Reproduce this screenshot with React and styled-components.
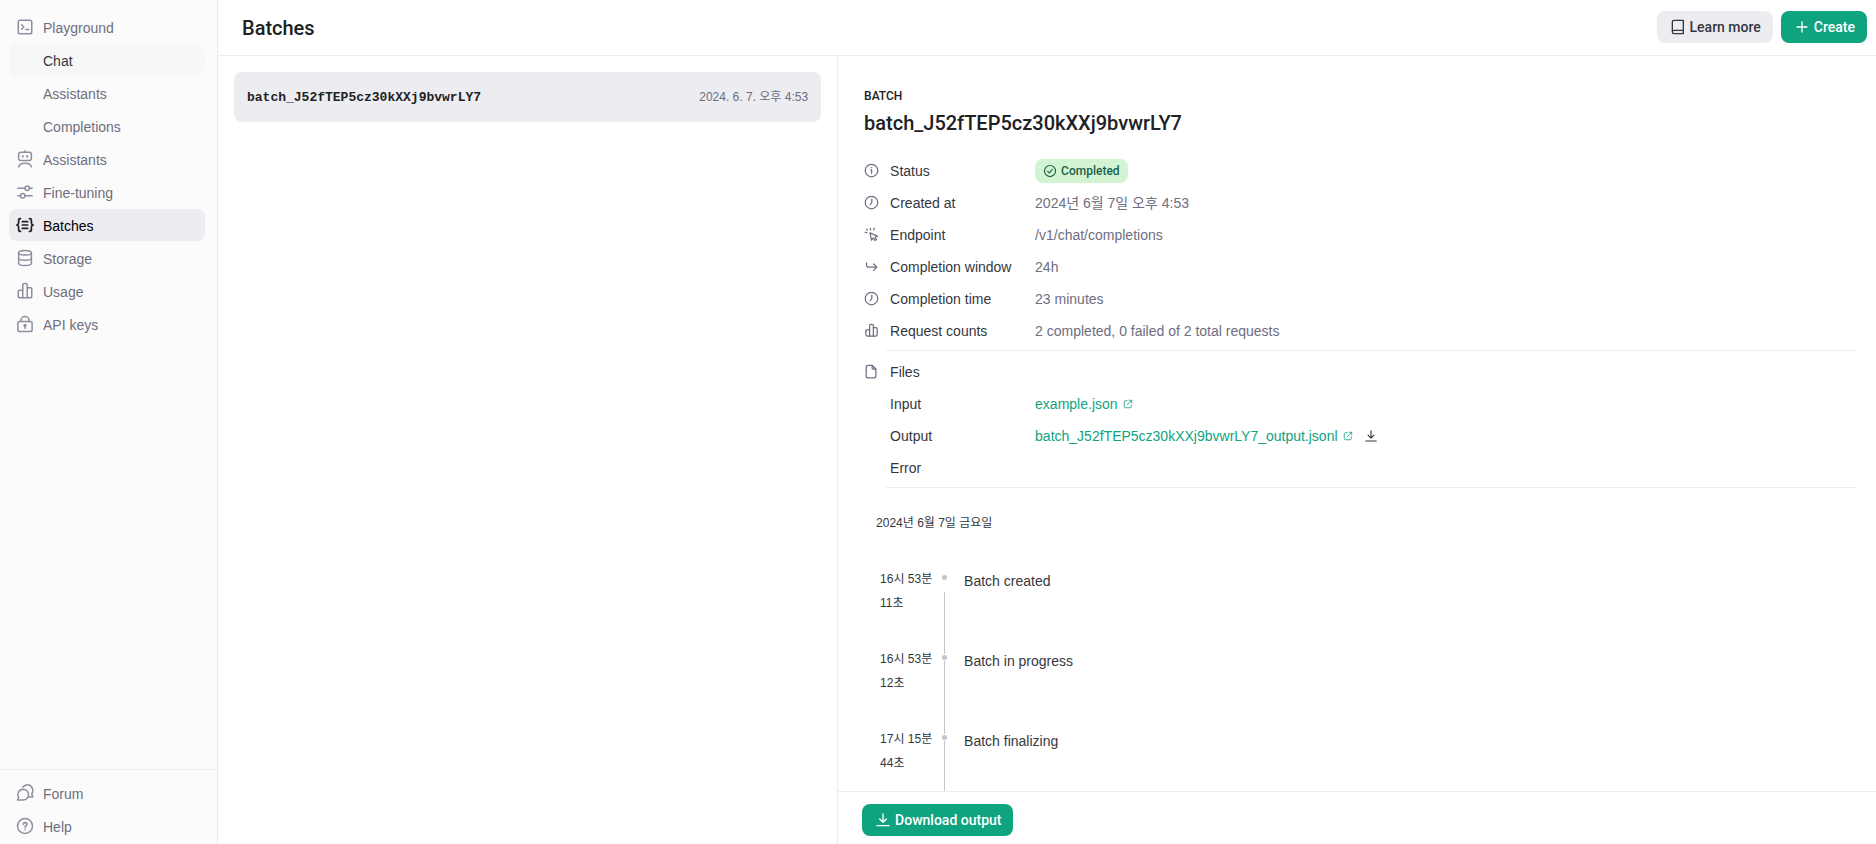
import React from "react";
import styled, { createGlobalStyle } from "styled-components";

//colors
const GREEN = "#10a37f";
const INK = "#202123";
const TEXT = "#353740";
const GRAY = "#6e6e80";
const ICON_GRAY = "#8e8ea0";
const LINE = "#ececec";
const SOFT = "#ececf1";

//fonts
const SANS = `"Liberation Sans", "Noto Sans CJK KR", sans-serif`;
const MEDIUM = `Roboto, "Noto Sans CJK KR", sans-serif`;
const MONO = `"Liberation Mono", monospace`;

const GlobalStyle = createGlobalStyle`
  * { box-sizing: border-box; }
  body {
    margin: 0;
    font-family: ${SANS};
    font-size: 14px;
    line-height: 20px;
    color: ${TEXT};
    background: #fff;
  }
  h1, h2, p, dl, dd, ul, ol { margin: 0; padding: 0; }
  ul, ol { list-style: none; }
  a { color: inherit; text-decoration: none; }
  button { font: inherit; color: inherit; border: 0; cursor: pointer; }
`;

const Page = styled.div`
  display: flex;
  height: 100vh;
  overflow: hidden;
`;

const Sidebar = styled.nav`
  display: flex;
  flex-direction: column;
  justify-content: space-between;
  flex: 0 0 218px;
  background: #fbfbfb;
  border-right: 1px solid ${LINE};
`;

const NavList = styled.ul`
  display: flex;
  flex-direction: column;
  gap: 1px;
  padding: ${(props) => (props.$bottom ? "7px 12px 2px 9px" : "11px 12px 0 9px")};
  border-top: ${(props) => (props.$bottom ? `1px solid ${LINE}` : "none")};
`;

const NavLink = styled.a`
  display: flex;
  align-items: center;
  gap: 9px;
  height: 32px;
  padding: 0 7px;
  padding-left: ${(props) => (props.$sub ? "34px" : "7px")};
  border-radius: 8px;
  color: ${(props) => (props.$active ? "#000" : props.$hovered ? TEXT : GRAY)};
  background: ${(props) => (props.$active ? SOFT : props.$hovered ? "#f7f7f7" : "transparent")};

  svg {
    color: ${(props) => (props.$active ? INK : ICON_GRAY)};
    flex: none;
  }
`;

const NavLabel = styled.span`
  padding-top: 2px;
`;

const Main = styled.main`
  display: flex;
  flex-direction: column;
  flex: 1;
  min-width: 0;
`;

const TopBar = styled.header`
  display: flex;
  justify-content: space-between;
  align-items: center;
  height: 56px;
  flex: none;
  padding: 0 9px 0 24px;
  border-bottom: 1px solid ${LINE};
`;

const PageTitle = styled.h1`
  font-family: ${MEDIUM};
  font-size: 20px;
  line-height: 28px;
  font-weight: 500;
  color: ${INK};
`;

const Actions = styled.div`
  display: flex;
  gap: 8px;
  padding-bottom: 2px;
`;

const Button = styled.button`
  display: flex;
  align-items: center;
  gap: 4px;
  height: 32px;
  padding: 0 12px 0 13px;
  border-radius: 8px;
  font-family: ${MEDIUM};
  font-weight: 500;
  color: ${(props) => (props.$primary ? "#fff" : TEXT)};
  background: ${(props) => (props.$primary ? GREEN : SOFT)};
`;

const Split = styled.div`
  display: flex;
  flex: 1;
  min-height: 0;
`;

const ListPane = styled.section`
  width: 37.4%;
  flex: none;
  padding: 16px;
  border-right: 1px solid ${LINE};
`;

const BatchItem = styled.button`
  display: flex;
  justify-content: space-between;
  align-items: center;
  width: 100%;
  height: 50px;
  padding: 0 13px;
  border-radius: 8px;
  background: ${SOFT};
`;

const BatchName = styled.span`
  padding-top: 2px;
  font-family: ${MONO};
  font-size: 13px;
  font-weight: 700;
  color: ${INK};
`;

const BatchDate = styled.span`
  font-size: 12px;
  color: ${GRAY};
`;

const DetailPane = styled.section`
  display: flex;
  flex-direction: column;
  flex: 1;
  min-width: 0;
`;

const DetailBody = styled.div`
  display: flex;
  flex-direction: column;
  flex: 1;
  min-height: 0;
  overflow: hidden;
  padding: 30px 20px 0 26px;
`;

const Overline = styled.p`
  font-family: ${MEDIUM};
  font-size: 12px;
  font-weight: 500;
  color: ${INK};
`;

const BatchTitle = styled.h2`
  margin: 3px 0 18px;
  font-family: ${MEDIUM};
  font-size: 20px;
  line-height: 28px;
  font-weight: 500;
  color: ${INK};
`;

const Property = styled.div`
  display: grid;
  grid-template-columns: 26px 145px 1fr;
  align-items: center;
  height: 32px;

  svg {
    display: block;
  }
`;

const PropertyIcon = styled.span`
  padding-bottom: 2px;
  color: ${GRAY};
`;

const Value = styled.dd`
  display: flex;
  align-items: center;
  color: ${GRAY};
`;

const Divider = styled.hr`
  width: calc(100% - 22px);
  flex: none;
  margin: 3px 0 5px 22px;
  border: 0;
  border-top: 1px solid ${SOFT};
`;

const Badge = styled.span`
  display: flex;
  align-items: center;
  gap: 4px;
  height: 24px;
  padding: 0 8px;
  border-radius: 8px;
  font-family: ${MEDIUM};
  font-size: 12px;
  font-weight: 500;
  color: #1a5f4a;
  background: #d2f4d3;
`;

const FileLink = styled.a`
  display: flex;
  align-items: center;
  gap: 5px;
  color: ${GREEN};
`;

const IconButton = styled.button`
  display: flex;
  margin-left: 11px;
  padding: 0;
  background: none;
  color: ${TEXT};
`;

const TimelineDate = styled.p`
  padding: 20px 12px 34px;
  font-size: 12px;
`;

const Timeline = styled.ol`
  display: flex;
  flex-direction: column;
  flex: 1;
  min-height: 0;
`;

const Step = styled.li`
  display: grid;
  grid-template-columns: 58px 18px 1fr;
  column-gap: 4px;
  height: 80px;
  padding-left: 16px;

  &:last-child {
    height: auto;
    flex: 1;
  }
`;

const StepTime = styled.time`
  font-size: 12px;
  line-height: 24px;
`;

const Rail = styled.div`
  display: flex;
  flex-direction: column;
  padding-top: 8px;
`;

const Dot = styled.span`
  width: 5px;
  height: 5px;
  flex: none;
  border-radius: 50%;
  background: #c5c5d2;
`;

const Stem = styled.span`
  width: 1px;
  flex: 1;
  margin: ${(props) => (props.$first ? "12px" : "1px")} 2px -7px;
  background: #c5c5d2;
`;

const StepLabel = styled.span`
  padding-top: 4px;
`;

const Footer = styled.footer`
  display: flex;
  flex: none;
  padding: 12px 24px 8px;
  border-top: 1px solid ${LINE};
`;

const shapes = {
  playground: (
    <>
      <rect x="3" y="3" width="18" height="18" rx="2.5" />
      <path d="M7.5 9l3 3-3 3M13 15.2h4" />
    </>
  ),
  assistant: (
    <>
      <rect x="3.5" y="3" width="17" height="11" rx="3" />
      <path d="M12 1v2M3.500 22.500C4 19.500 7.500 17.500 12 17.500s8 2 8.500 5" />
      <path d="M9 7.800v1.200M15 7.800v1.200" strokeWidth="2.400" />
    </>
  ),
  tuning: (
    <>
      <circle cx="15" cy="7" r="3" />
      <circle cx="9" cy="17" r="3" />
      <path d="M2.500 7H12M18 7h3.500M2.500 17H6M12 17h9.500" />
    </>
  ),
  batches: (
    <g strokeWidth="2.300">
      <path d="M6 3.500H5.500C4 3.500 3.500 4.500 3.500 6v3c0 1.700-.8 2.600-2.300 3 1.500.4 2.300 1.300 2.300 3v3c0 1.500.5 2.500 2 2.500H6" />
      <path d="M18 3.500h.5c1.500 0 2 1 2 2.500v3c0 1.700.8 2.600 2.300 3-1.500.4-2.300 1.300-2.300 3v3c0 1.500-.5 2.500-2 2.500H18" />
      <path d="M8.500 7.500h7M8.500 12h7M8.500 16.500h7" />
    </g>
  ),
  storage: (
    <>
      <ellipse cx="12" cy="5" rx="8.500" ry="3" />
      <path d="M3.500 5V19c0 1.700 3.800 3 8.500 3s8.500-1.300 8.500-3V5M3.500 12c0 1.700 3.800 3 8.500 3s8.500-1.300 8.500-3" />
    </>
  ),
  chart: (
    <>
      <path d="M9 21V4.500C9 3 9.700 2 11 2h2c1.300 0 2 1 2 2.500V21" />
      <path d="M9 11H4.500C3.700 11 3 11.700 3 12.500V18.500C3 20 4 21 5.500 21H18.500c1.500 0 2.500-1 2.500-2.500V9C21 8 20.300 7.500 19.500 7.500H15" />
    </>
  ),
  lock: (
    <>
      <rect x="2.500" y="8.500" width="19" height="13.500" rx="2.500" />
      <path d="M6.500 8.500V7.500a5.500 5.500 0 0 1 11 0v1M12 15v2.500" />
      <circle cx="12" cy="14" r="1.200" fill="currentColor" />
    </>
  ),
  forum: (
    <>
      <path d="M9.500 7a7.200 7.200 0 1 1 0 14.400H2l1.500-3.400A7.200 7.200 0 0 1 9.500 7z" />
      <path d="M9 4.200a7.400 7.400 0 0 1 12 8.800l1.500 4.200H17" />
    </>
  ),
  help: (
    <>
      <circle cx="12" cy="12" r="10" />
      <path d="M9.700 9.500c.2-1.400 1.200-2 2.400-2 1.300 0 2.400.8 2.400 2.100 0 1.700-2.400 1.900-2.400 3.900M12.100 16.500v.2" strokeWidth="2.200" />
    </>
  ),
  book: (
    <path d="M6 2h14v20H6a2.500 2.500 0 0 1-2.500-2.500v-15A2.500 2.500 0 0 1 6 2zM3.500 19.500A2.500 2.500 0 0 1 6 17H20" />
  ),
  plus: <path d="M12 4.500v15M4.500 12h15" />,
  info: (
    <>
      <circle cx="12" cy="12" r="10" />
      <path d="M11 11h1.200v5.500M12 7.200v.2" />
    </>
  ),
  clock: (
    <>
      <circle cx="12" cy="12" r="10" />
      <path d="M12.500 6.500V12l-2.500 3.500" />
    </>
  ),
  check: (
    <>
      <circle cx="12" cy="12" r="9.500" />
      <path d="M8 12.500l2.800 2.800L16 9" />
    </>
  ),
  cursor: (
    <path d="M9.500 9.500l2.500 11.500 3-3.500 2.500 4 2.500-1.500-2-4 3.500-1.500L9.500 9.500zM10 2l.5 2.500M2 8.500l2.500.5M16.500 2l-1.200 2.500M4 3.500l1.500 1.500" />
  ),
  corner: <path d="M4 6v3.500C4 12 5 13 7.500 13H20M15.500 8l5 5-5 5" />,
  file: (
    <path d="M13 2H6.500a3 3 0 0 0-3 3v14a3 3 0 0 0 3 3h9.500a3 3 0 0 0 3-3V8l-6-6zM13 2v4.500C13 7.500 13.500 8 14.500 8H19" />
  ),
  external: <path d="M10 4H6a3 3 0 0 0-3 3v11a3 3 0 0 0 3 3h11a3 3 0 0 0 3-3v-4M14.500 3h6.500v6.500M21 3L10.500 13.500" />,
  download: <path d="M12 3v12M7 10.500l5 5 5-5M3 20.500h18" />,
};

function Icon({ name, size = 18, stroke = 2 }) {
  return (
    <svg
      width={size}
      height={size}
      viewBox="0 0 24 24"
      fill="none"
      stroke="currentColor"
      strokeWidth={stroke}
      strokeLinecap="round"
      strokeLinejoin="round"
      aria-hidden="true"
    >
      {shapes[name]}
    </svg>
  );
}

const mainLinks = [
  { label: "Playground", icon: "playground" },
  { label: "Chat", hovered: true },
  { label: "Assistants" },
  { label: "Completions" },
  { label: "Assistants", icon: "assistant" },
  { label: "Fine-tuning", icon: "tuning" },
  { label: "Batches", icon: "batches", active: true },
  { label: "Storage", icon: "storage" },
  { label: "Usage", icon: "chart" },
  { label: "API keys", icon: "lock" },
];

const bottomLinks = [
  { label: "Forum", icon: "forum" },
  { label: "Help", icon: "help" },
];

const steps = [
  { time: ["16시 53분", "11초"], label: "Batch created" },
  { time: ["16시 53분", "12초"], label: "Batch in progress" },
  { time: ["17시 15분", "44초"], label: "Batch finalizing" },
];

function Nav({ links, bottom }) {
  return (
    <NavList $bottom={bottom}>
      {links.map((link, i) => (
        <li key={i}>
          <NavLink href="#" $sub={!link.icon} $active={link.active} $hovered={link.hovered}>
            {link.icon && <Icon name={link.icon} />}
            <NavLabel>{link.label}</NavLabel>
          </NavLink>
        </li>
      ))}
    </NavList>
  );
}

function Row({ icon, label, children }) {
  return (
    <Property>
      <PropertyIcon>{icon && <Icon name={icon} size={15} />}</PropertyIcon>
      <dt>{label}</dt>
      <Value>{children}</Value>
    </Property>
  );
}

function App() {
  return (
    <Page>
      <GlobalStyle />
      <Sidebar>
        <Nav links={mainLinks} />
        <Nav links={bottomLinks} bottom />
      </Sidebar>

      <Main>
        <TopBar>
          <PageTitle>Batches</PageTitle>
          <Actions>
            <Button>
              <Icon name="book" size={16} />
              Learn more
            </Button>
            <Button $primary>
              <Icon name="plus" size={16} />
              Create
            </Button>
          </Actions>
        </TopBar>

        <Split>
          <ListPane>
            <BatchItem>
              <BatchName>batch_J52fTEP5cz30kXXj9bvwrLY7</BatchName>
              <BatchDate>2024. 6. 7. 오후 4:53</BatchDate>
            </BatchItem>
          </ListPane>

          <DetailPane>
            <DetailBody>
              <Overline>BATCH</Overline>
              <BatchTitle>batch_J52fTEP5cz30kXXj9bvwrLY7</BatchTitle>

              <dl>
                <Row icon="info" label="Status">
                  <Badge>
                    <Icon name="check" size={14} />
                    Completed
                  </Badge>
                </Row>
                <Row icon="clock" label="Created at">2024년 6월 7일 오후 4:53</Row>
                <Row icon="cursor" label="Endpoint">/v1/chat/completions</Row>
                <Row icon="corner" label="Completion window">24h</Row>
                <Row icon="clock" label="Completion time">23 minutes</Row>
                <Row icon="chart" label="Request counts">2 completed, 0 failed of 2 total requests</Row>
              </dl>
              <Divider />
              <dl>
                <Row icon="file" label="Files" />
                <Row label="Input">
                  <FileLink href="#">
                    example.json
                    <Icon name="external" size={10} />
                  </FileLink>
                </Row>
                <Row label="Output">
                  <FileLink href="#">
                    batch_J52fTEP5cz30kXXj9bvwrLY7_output.jsonl
                    <Icon name="external" size={10} />
                  </FileLink>
                  <IconButton aria-label="Download output file">
                    <Icon name="download" size={14} />
                  </IconButton>
                </Row>
                <Row label="Error" />
              </dl>
              <Divider />

              <TimelineDate>2024년 6월 7일 금요일</TimelineDate>
              <Timeline>
                {steps.map((step, i) => (
                  <Step key={step.label}>
                    <StepTime>
                      {step.time[0]}
                      <br />
                      {step.time[1]}
                    </StepTime>
                    <Rail>
                      <Dot />
                      <Stem $first={i === 0} />
                    </Rail>
                    <StepLabel>{step.label}</StepLabel>
                  </Step>
                ))}
              </Timeline>
            </DetailBody>

            <Footer>
              <Button $primary>
                <Icon name="download" size={16} />
                Download output
              </Button>
            </Footer>
          </DetailPane>
        </Split>
      </Main>
    </Page>
  );
}

export default App;
